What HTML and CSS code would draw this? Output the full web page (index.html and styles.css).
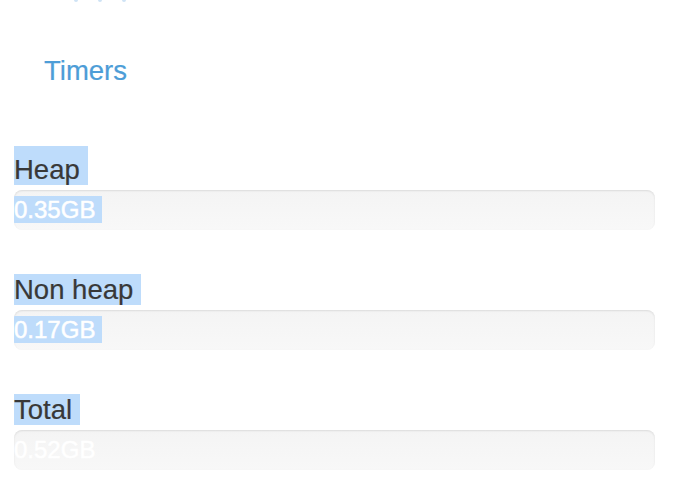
FILE: index.html
```html
<!DOCTYPE html>
<html>
<head>
<meta charset="utf-8">
<link rel="stylesheet" href="styles.css">
</head>
<body>
<div class="dots"><span class="dot"></span><span class="dot"></span><span class="dot"></span></div>
<div class="nav"><a class="nav-link" href="#">Timers</a></div>
<div class="memory">
  <div class="group">
    <div class="label"><span class="sel first">Heap</span></div>
    <div class="progress"><span class="sel val">0.35GB</span></div>
  </div>
  <div class="group">
    <div class="label"><span class="sel">Non heap</span></div>
    <div class="progress"><span class="sel val">0.17GB</span></div>
  </div>
  <div class="group">
    <div class="label"><span class="sel">Total</span></div>
    <div class="progress"><span class="val">0.52GB</span></div>
  </div>
</div>
</body>
</html>
```
FILE: styles.css
```css
html, body {
  margin: 0;
  padding: 0;
  background: #ffffff;
}
body {
  font-family: "Liberation Sans", Arial, sans-serif;
  color: #383838;
}
.dots {
  display: flex;
  gap: 20px;
  padding-left: 74px;
  height: 3px;
}
.dot {
  width: 4px;
  height: 2px;
  border-radius: 0 0 2px 2px;
  background: #cfe3f5;
}
.nav {
  margin-top: 53px;
  padding-left: 44px;
  height: 30px;
  line-height: 30px;
  font-size: 27.5px;
}
.nav-link {
  color: #4d9dd7;
  text-decoration: none;
  -webkit-text-stroke: 0.2px #4d9dd7;
}
.memory {
  margin-top: 60px;
  padding-left: 14px;
  width: 641px;
}
.group {
  margin-bottom: 44px;
}
.label {
  font-size: 27.5px;
  line-height: 31px;
  height: 31px;
}
.label .sel {
  display: inline-block;
  line-height: 31px;
  padding-right: 8px;
  vertical-align: top;
  -webkit-text-stroke: 0.2px #383838;
}
.label .sel.first {
  padding-top: 8px;
}
.group:first-child .label {
  height: 39px;
}
.sel {
  background: #bedcfb;
}
.progress {
  margin-top: 5px;
  height: 40px;
  line-height: 40px;
  border-radius: 8px;
  background: linear-gradient(#f4f4f4, #f8f8f8);
  box-shadow: inset 0 1px 2px rgba(0, 0, 0, 0.1);
  font-size: 24px;
  color: #ffffff;
  white-space: nowrap;
  overflow: hidden;
}
.progress .val {
  padding-right: 7px;
  -webkit-text-stroke: 0.5px #ffffff;
}
```
